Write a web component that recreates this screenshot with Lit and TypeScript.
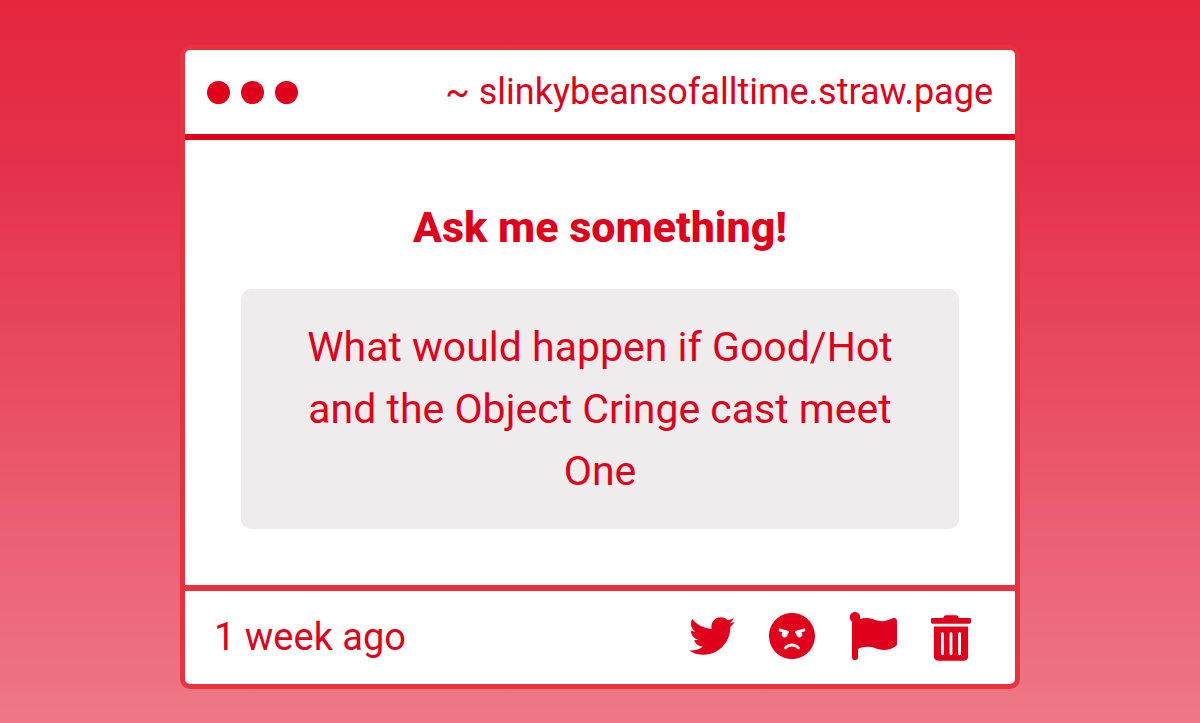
import { LitElement, html, css } from "lit";
import { customElement, property } from "lit/decorators.js";

interface Action {
  label: string;
  viewBox: string;
  width: number;
  path: string;
}

const ACTIONS: Action[] = [
  {
    label: "Share on Twitter",
    viewBox: "0 0 512 512",
    width: 46,
    path: "M459.37 151.716c.325 4.548.325 9.097.325 13.645 0 138.72-105.583 298.558-298.558 298.558-59.452 0-114.68-17.219-161.137-47.106 8.447.974 16.568 1.299 25.34 1.299 49.055 0 94.213-16.568 130.274-44.832-46.132-.975-84.792-31.188-98.112-72.772 6.498.974 12.995 1.624 19.818 1.624 9.421 0 18.843-1.3 27.614-3.573-48.081-9.747-84.143-51.98-84.143-102.985v-1.299c13.969 7.797 30.214 12.67 47.431 13.319-28.264-18.843-46.781-51.005-46.781-87.391 0-19.492 5.197-37.36 14.294-52.954 51.655 63.675 129.3 105.258 216.365 109.807-1.624-7.797-2.599-15.918-2.599-24.04 0-57.828 46.782-104.934 104.934-104.934 30.213 0 57.502 12.67 76.67 33.137 23.715-4.548 46.456-13.32 66.599-25.34-7.798 24.366-24.366 44.833-46.132 57.827 21.117-2.273 41.584-8.122 60.426-16.243-14.292 20.791-32.161 39.308-52.628 54.253z",
  },
  {
    label: "Block sender",
    viewBox: "0 8 496 496",
    width: 46,
    path: "M248 8C111 8 0 119 0 256s111 248 248 248 248-111 248-248S385 8 248 8zM136 240c0-9.3 4.1-17.5 10.5-23.4l-31-9.3c-8.5-2.5-13.3-11.5-10.7-19.9 2.5-8.5 11.4-13.2 19.9-10.7l80 24c8.5 2.5 13.3 11.5 10.7 19.9-2.1 6.9-8.4 11.4-15.3 11.4-.5 0-1.1-.2-1.7-.2.7 2.7 1.7 5.3 1.7 8.2 0 17.7-14.3 32-32 32S136 257.7 136 240zm168 154.2c-27.8-33.4-84.2-33.4-112.1 0-13.5 16.3-38.2-4.2-24.6-20.5 20-24 49.4-37.8 80.6-37.8s60.6 13.8 80.6 37.8c13.8 16.5-11.1 36.6-24.5 20.5zm76.6-186.9l-31 9.3c6.3 5.8 10.5 14.1 10.5 23.4 0 17.7-14.3 32-32 32s-32-14.3-32-32c0-2.9.9-5.6 1.7-8.2-.6.1-1.1.2-1.7.2-6.9 0-13.2-4.5-15.3-11.4-2.5-8.5 2.3-17.4 10.7-19.9l80-24c8.4-2.5 17.4 2.3 19.9 10.7 2.5 8.5-2.3 17.4-10.8 19.9z",
  },
  {
    label: "Report",
    viewBox: "0 0 512 512",
    width: 48,
    path: "M349.565 98.783C295.978 98.783 251.721 64 184.348 64c-24.955 0-47.309 4.384-68.045 12.013a55.947 55.947 0 0 0 3.586-23.562C118.117 24.015 94.806 1.206 66.338.048 34.345-1.254 8 24.296 8 56c0 19.026 9.497 35.825 24 45.945V488c0 13.255 10.745 24 24 24h16c13.255 0 24-10.745 24-24v-94.4c28.311-12.064 63.582-22.122 114.435-22.122 53.588 0 97.844 34.783 165.217 34.783 48.169 0 86.667-16.294 122.505-40.858C506.84 359.452 512 349.571 512 339.045v-243.1c0-23.393-24.269-38.87-45.485-29.016-34.338 15.948-76.454 31.854-116.95 31.854z",
  },
  {
    label: "Delete",
    viewBox: "0 -24 448 512",
    width: 40,
    path: "M32 464a48 48 0 0 0 48 48h288a48 48 0 0 0 48-48V128H32zm272-256a16 16 0 0 1 32 0v224a16 16 0 0 1-32 0zm-96 0a16 16 0 0 1 32 0v224a16 16 0 0 1-32 0zm-96 0a16 16 0 0 1 32 0v224a16 16 0 0 1-32 0zM432 32H312l-9.4-18.7A24 24 0 0 0 281.1 0H166.8a23.72 23.72 0 0 0-21.4 13.3L136 32H16A16 16 0 0 0 0 48v32a16 16 0 0 0 16 16h416a16 16 0 0 0 16-16V48a16 16 0 0 0-16-16z",
  },
];

@customElement("question-card")
export class QuestionCard extends LitElement {
  @property() site = "";
  @property() heading = "";
  @property() question = "";
  @property() age = "";

  static styles = css`
    :host {
      display: block;
      width: 100%;
      max-width: 840px;
    }
    .card {
      border: 5px solid #e8323d;
      border-radius: 10px;
      background: #fff;
      color: #e0001b;
    }
    .header {
      display: flex;
      align-items: center;
      justify-content: space-between;
      gap: 24px;
      padding: 17px 22px;
      border-bottom: 6px solid #e0001b;
    }
    .dots {
      display: flex;
      gap: 11px;
    }
    .dot {
      width: 23px;
      height: 23px;
      border-radius: 50%;
      background: currentColor;
    }
    .site {
      color: inherit;
      font-size: 36px;
      line-height: 50px;
      text-decoration: none;
    }
    .body {
      padding: 60px 56px 56px;
    }
    .heading {
      margin: 0 0 34px;
      font-size: 43px;
      line-height: 55px;
      font-weight: 800;
      text-align: center;
    }
    .question {
      margin: 0;
      padding: 27px 56px;
      border-radius: 10px;
      background: #eeecec;
      font-size: 41px;
      line-height: 62px;
      text-align: center;
    }
    .footer {
      display: flex;
      align-items: center;
      justify-content: space-between;
      gap: 24px;
      padding: 19px 44px 22px 29px;
      border-top: 6px solid #e8323d;
    }
    .age {
      padding-top: 2px;
      font-size: 38px;
      line-height: 50px;
    }
    .actions {
      display: flex;
      align-items: center;
      gap: 34px;
    }
    .action {
      display: block;
      padding: 0;
      border: 0;
      background: none;
      color: inherit;
      cursor: pointer;
    }
    .icon {
      display: block;
      fill: currentColor;
      overflow: visible;
    }
  `;

  render() {
    return html`
      <article class="card">
        <header class="header">
          <div class="dots" aria-hidden="true">
            <span class="dot"></span><span class="dot"></span><span class="dot"></span>
          </div>
          <a class="site" href="#">~ ${this.site}</a>
        </header>
        <div class="body">
          <h1 class="heading">${this.heading}</h1>
          <p class="question">${this.question}</p>
        </div>
        <footer class="footer">
          <time class="age">${this.age}</time>
          <div class="actions">
            ${ACTIONS.map(
              (a) => html`
                <button class="action" type="button" aria-label=${a.label}>
                  <svg class="icon" viewBox=${a.viewBox} width=${a.width} aria-hidden="true">
                    <path d=${a.path}></path>
                  </svg>
                </button>
              `
            )}
          </div>
        </footer>
      </article>
    `;
  }
}

@customElement("app-root")
export class AppRoot extends LitElement {
  static styles = css`
    :host {
      display: flex;
      justify-content: center;
      align-items: flex-start;
      box-sizing: border-box;
      min-height: 100vh;
      padding: 45px 24px 34px;
      background: linear-gradient(#e5263f, #e5304a 22%, #ee7886);
      font-family: Roboto, "Liberation Sans", sans-serif;
    }
  `;

  render() {
    return html`
      <question-card
        site="slinkybeansofalltime.straw.page"
        heading="Ask me something!"
        question="What would happen if Good/Hot and the Object Cringe cast meet One"
        age="1 week ago"
      ></question-card>
    `;
  }
}
